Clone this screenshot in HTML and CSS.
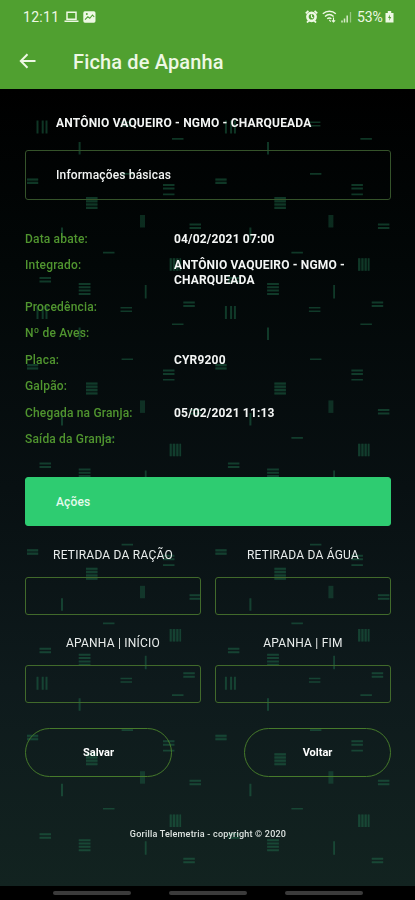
FILE: index.html
```html
<!DOCTYPE html>
<html lang="pt-BR">
<head>
<meta charset="utf-8">
<meta name="viewport" content="width=device-width, initial-scale=1">
<title>Ficha de Apanha</title>
<link rel="stylesheet" href="styles.css">
</head>
<body>
<div class="phone">
  <header class="header">
    <div class="status">
      <span class="clock">12:11</span>
      <svg class="laptop" width="15" height="12" viewBox="0 0 15 12"><path d="M3 1.2h9v7H3zM.5 10.3h14" fill="none" stroke="currentColor" stroke-width="1.5"/></svg>
      <svg class="photo" width="13" height="12" viewBox="0 0 13 12"><rect x=".3" y=".3" width="12.2" height="11.4" rx="1.6" fill="currentColor"/><path d="M2 8.600 4.800 5.800l2 1.500L9.500 4l1.700 2" fill="none" stroke="#50a030" stroke-width="1.1"/><circle cx="3.8" cy="3.1" r="1" fill="#50a030"/></svg>
      <span class="spacer"></span>
      <svg class="alarm" width="13" height="13" viewBox="0 0 13 13"><circle cx="6.5" cy="6.8" r="4.1" fill="none" stroke="currentColor" stroke-width="2.600"/><path d="M6.5 4.5v2.6l1.7.9" fill="none" stroke="currentColor" stroke-width="1.1"/><path d="M.8 3.3 3.4.9M12.2 3.3 9.6.9M2 12.500l1.800-1.900M11 12.500l-1.800-1.900" stroke="currentColor" stroke-width="1.8"/></svg>
      <svg class="wifi" width="15" height="13" viewBox="0 0 15 13"><path d="M.8 3.8C4.6.4 10.2.4 13.8 3.8M3 6.4c2.600-2.300 6-2.300 8.600 0M5.200 8.800c1.300-1.100 2.900-1.100 4.200 0" fill="none" stroke="currentColor" stroke-width="1.4"/><path d="M7.300 10l1.500 1.600M11.500 7.500v4.300M9.900 10.300l1.600 1.700 1.600-1.700" fill="none" stroke="currentColor" stroke-width="1.1"/></svg>
      <svg class="signal" width="11" height="12" viewBox="0 0 11 12"><path d="M1 9.5v2M3.500 7.500v4M6.200 4.500v7" stroke="currentColor" stroke-width="1.5" opacity=".85"/><path d="M9.500 1v10.500" stroke="currentColor" stroke-width="1.3" opacity=".45"/></svg>
      <span class="percent">53%</span>
      <svg class="battery" width="9" height="12" viewBox="0 0 9 12"><path d="M2.800 0h3.400v2H8.500v9.500H.5V2h2.300z" fill="currentColor"/><path d="M5 3.500 3 7h1.500L4 9.800 6.300 6H4.800z" fill="#50a030"/></svg>
    </div>
    <div class="appbar">
      <svg class="back" width="18" height="18" viewBox="0 0 18 18"><path d="M16.500 9H2.500M8.500 2.200 1.800 9l6.700 6.800" fill="none" stroke="currentColor" stroke-width="2"/></svg>
      <h1>Ficha de Apanha</h1>
    </div>
  </header>

  <main class="content">
    <svg class="pattern" width="415" height="796" viewBox="0 90 415 796" aria-hidden="true">
      <defs>
        <g id="tile" fill="#237a53">
          <path d="M36.5 30.500h2v13h-2zM41.700 30.500h2v13h-2zM45.500 30.500h2v13h-2z"/>
          <path d="M120.500 31.500h11.500v1.500h-11.500zM120.500 35h11.500v1.500h-11.500z"/>
          <path d="M172 48h11.500v1.700H172zM121.600 83h11.400v1.700h-11.400zM103 161.700h11.500v1.700H103z"/>
          <path d="M78.600 52h2v12.500h-2zM61 137.500h2V150h-2zM144.800 195h1.800v13.500h-1.800z"/>
          <path d="M27 88.500h11.200v2H27zM27 92h11.200v2H27z"/>
          <path d="M163 94h11.500v2H163zM163 97.500h11.500v2H163zM163 103.500h11.500v1.700H163z"/>
          <path d="M86 107h11.500v2H86zM86 110.300h11.500v2H86zM86 113.600h11.500v2H86zM86 117h11.500v2H86z"/>
          <path d="M86 107h11.500v12H86zM27 88.500h11.200v5.500H27zM169.700 168.300h11.400v12.500h-11.400z" opacity=".35"/>
          <path d="M140 125h5v12.500h-5z" opacity=".75"/>
          <path d="M189.500 133.500H201v2h-11.500zM189.500 137H201v2h-11.500z"/>
          <path d="M169.700 168.300h2v12.500h-2zM173 168.300h2v12.500h-2zM176.300 168.300h2v12.500h-2zM179.600 168.300h1.500v12.500h-1.500z"/>
          <path d="M39.500 187h11.500v2H39.500zM39.500 190.500h11.500v2H39.500z"/>
          <path d="M78.700 193H90.500v2H78.700zM78.700 196.300H90.500v2H78.700zM78.700 199.600H90.500v2H78.700zM78.700 203H90.500v2H78.700z"/>
          <path d="M183.300 211.500h11.500v2h-11.500zM183.300 215h11.500v2h-11.500z"/>
        </g>
        <g id="row"><use href="#tile"/><use href="#tile" x="188.400"/></g>
      </defs>
      <g opacity=".44">
        <use href="#row" y="90"/><use href="#row" y="275.400"/><use href="#row" y="460.800"/><use href="#row" y="646.200"/>
      </g>
    </svg>

    <h2 class="farm">ANTÔNIO VAQUEIRO - NGMO - CHARQUEADA</h2>
    <div class="panel">Informações básicas</div>
    <dl class="info">
      <dt>Data abate:</dt><dd>04/02/2021 07:00</dd>
      <dt>Integrado:</dt><dd>ANTÔNIO VAQUEIRO - NGMO -<br>CHARQUEADA</dd>
      <dt>Procedência:</dt><dd></dd>
      <dt>Nº de Aves:</dt><dd></dd>
      <dt>Placa:</dt><dd>CYR9200</dd>
      <dt>Galpão:</dt><dd></dd>
      <dt>Chegada na Granja:</dt><dd>05/02/2021 11:13</dd>
      <dt>Saída da Granja:</dt><dd></dd>
    </dl>
    <div class="panel actions">Ações</div>
    <div class="fields">
      <div class="field"><span>RETIRADA DA RAÇÃO</span><div class="box"></div></div>
      <div class="field"><span>RETIRADA DA ÁGUA</span><div class="box"></div></div>
      <div class="field"><span>APANHA | INÍCIO</span><div class="box"></div></div>
      <div class="field"><span>APANHA | FIM</span><div class="box"></div></div>
    </div>
    <div class="buttons">
      <button>Salvar</button>
      <button>Voltar</button>
    </div>
    <footer>Gorilla Telemetria - copyright © 2020</footer>
  </main>
  <div class="navbar"><i></i><i></i><i></i></div>
</div>
</body>
</html>
```
FILE: styles.css
```css
* { box-sizing: border-box; }
body { margin: 0; background: #000; font-family: Roboto, "Liberation Sans", sans-serif; }
.phone { width: 415px; height: 900px; display: flex; flex-direction: column; overflow: hidden; }
.header { height: 89px; flex: none; background: #50a030; color: #eef8e4; }
.status { height: 33px; padding: 0 21px 0 23px; display: flex; align-items: center; font-size: 14px; }
.clock { width: 36px; letter-spacing: .3px; white-space: nowrap; }
.laptop { margin-left: 5px; }
.photo { margin-left: 4px; }
.spacer { flex: 1; }
.alarm { margin-right: -1px; }
.wifi { margin-left: 5px; }
.signal { margin-left: 4px; }
.percent { margin-left: 5px; width: 27px; white-space: nowrap; letter-spacing: -.1px; }
.battery { margin-left: 1px; }
.appbar { height: 56px; padding-left: 19px; display: flex; align-items: center; }
h1 { margin: 2px 0 0 36px; font-size: 20px; line-height: 24px; font-weight: 500; letter-spacing: .15px; }

.content {
  position: relative;
  height: 797px;
  flex: none;
  padding: 26px 24px 0 25px;
  background: linear-gradient(#000 0%, #020707 22%, #081012 50%, #0e1a1c 75%, #122320 100%);
  color: #f4f6f5;
}
.content > * { position: relative; }
.content > .pattern { position: absolute; left: 0; top: 1px; }
.farm { margin: 0; padding-left: 31px; font-size: 12px; line-height: 16px; font-weight: 700; letter-spacing: .19px; white-space: nowrap; }
.panel {
  height: 50px;
  margin-top: 19px;
  padding-left: 30px;
  display: flex;
  align-items: center;
  border: 1px solid #35532a;
  border-radius: 3px;
  font-size: 12px;
  font-weight: 500;
  letter-spacing: .15px;
}
.info {
  margin: 32px 0 0;
  display: grid;
  grid-template-columns: 149px 1fr;
  row-gap: 11.700px;
  font-size: 12px;
  line-height: 14.800px;
  font-weight: 500;
  letter-spacing: .17px;
}
.info dt { color: #50952f; white-space: nowrap; }
.info dd { margin: 0; font-weight: 700; }
.actions { height: 49px; margin-top: 30px; padding-top: 2px; background: #2ecc71; border-color: #2ecc71; color: #e4faec; }
.fields { margin-top: 22px; display: grid; grid-template-columns: 176px 176px; column-gap: 14px; row-gap: 21px; }
.field { text-align: center; font-size: 12px; line-height: 15px; letter-spacing: .22px; color: #e9edec; }
.field span { display: block; }
.box { height: 38px; margin-top: 14px; border: 1px solid #416a2b; border-radius: 3px; }
.buttons { margin-top: 25px; display: flex; justify-content: space-between; }
button {
  width: 147px;
  height: 49px;
  padding: 1px 0 0;
  border: 1px solid #467a2b;
  border-radius: 25px;
  background: none;
  color: #fff;
  font: 700 11px Roboto, "Liberation Sans", sans-serif;
}
footer { margin-top: 51px; text-align: center; font-size: 9px; line-height: 13px; font-weight: 500; letter-spacing: .21px; color: #dde3e0; }
.navbar { height: 14px; padding-top: 5px; display: flex; justify-content: center; gap: 38px; background: #000; }
.navbar i { width: 78px; height: 4px; border-radius: 2px; background: #3b3b3b; }
```
